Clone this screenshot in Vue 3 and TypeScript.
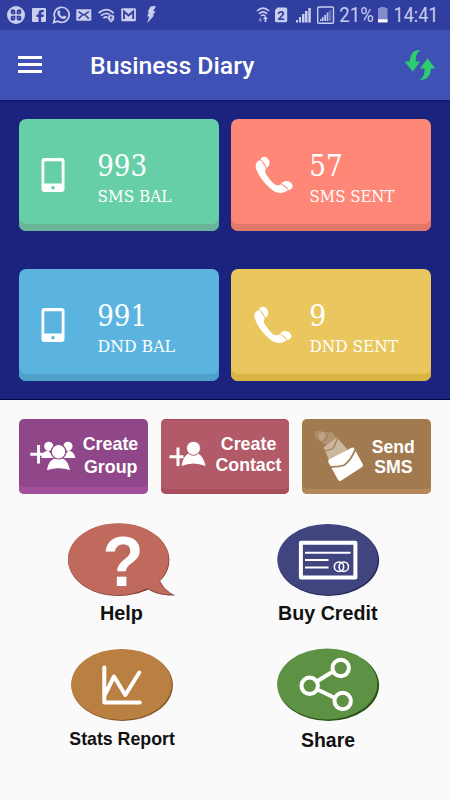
<script setup lang="ts">
interface Stat {
  value: string
  label: string
  tone: string
  icon: 'phone' | 'call'
  valueWidth: number
  labelWidth: number
  shift: number
}

const stats: Stat[] = [
  { value: '993', label: 'SMS BAL', tone: 'green', icon: 'phone', valueWidth: 50, labelWidth: 74, shift: 0 },
  { value: '57', label: 'SMS SENT', tone: 'coral', icon: 'call', valueWidth: 33.5, labelWidth: 85, shift: 0 },
  { value: '991', label: 'DND BAL', tone: 'blue', icon: 'phone', valueWidth: 50, labelWidth: 77.5, shift: 0 },
  { value: '9', label: 'DND SENT', tone: 'gold', icon: 'call', valueWidth: 17, labelWidth: 88.5, shift: -1.3 },
]
</script>

<template>
  <main class="screen">
    <header class="status">
      <svg class="status-art" viewBox="0 0 450 30" width="450" height="30">
        <g fill="#c9cdee">
          <circle cx="16" cy="15" r="9" />
          <g fill="#303f9f">
            <path d="M11 9.5h2.5q1.8 0 1.8 1.8v2.9h-2.8q-1.8 0-1.8-1.8zM21 9.500h-2.500q-1.800 0-1.800 1.800v2.900h2.800q1.800 0 1.800-1.800zM11 20.500h2.500q1.800 0 1.800-1.800v-2.900h-2.800q-1.800 0-1.800 1.800zM21 20.500h-2.500q-1.800 0-1.800-1.800v-2.900h2.800q1.800 0 1.800 1.800z" />
            <g fill="#9299cd"><circle cx="13.200" cy="12.200" r=".7" /><circle cx="18.800" cy="12.200" r=".7" /><circle cx="13.200" cy="17.800" r=".7" /><circle cx="18.800" cy="17.800" r=".7" /></g>
          </g>
          <rect x="32" y="8" width="14" height="14" rx="1" />
          <path d="M38.500 22v-5h-2v-2.400h2v-1.500q0-3.200 3-3.200h2.300v2.400h-1.600q-1.100 0-1.100 1.200v1.100h2.700l-.4 2.400h-2.300v5z" fill="#303f9f" />
          <path d="M53.600 22.700l1.300-4.700a7.500 7.500 0 1 1 2.900 3.200z" fill="none" stroke="#c9cdee" stroke-width="1.700" />
          <path d="M58 10.700q.7-.8 1.500-.4l1 2.300-.9 1.300q1.200 2.200 3.300 2.900l1.100-1.300 2.300 1.100q.2 2.300-2.500 2.500-3.400-.3-6-4.200-1.300-2.400.2-4.200z" />
          <rect x="76.300" y="9.300" width="15" height="11.500" rx=".8" />
          <path d="M78.500 11.700l5.200 3.500 5.200-3.500M78.500 18.600l3.600-3.300M88.900 18.600l-3.600-3.300" fill="none" stroke="#303f9f" stroke-width="1.500" />
          <g fill="none" stroke="#c9cdee" stroke-width="1.700">
            <path d="M98.700 13q8-7 15 .2M101 15.700q5.800-4.700 10.300 0M103.400 18.200q2.800-2.400 5 0" />
          </g>
          <path d="M107.700 15.500l3.400-1 3.400 1v3.200q-.8 2.600-3.400 4-2.700-1.400-3.400-4z" stroke="#303f9f" stroke-width=".6" />
          <path d="M111 16v4.500M109.500 17.500h3" stroke="#303f9f" stroke-width=".8" />
          <path d="M121.300 9.500q0-1.300 1.300-1.300h12q1.300 0 1.300 1.300v10.500q0 1.200-1.300 1.200h-12q-1.300 0-1.300-1.200z" />
          <path d="M124 19V11.500l4.600 4 4.600-4V19" fill="none" stroke="#303f9f" stroke-width="1.800" />
          <path d="M150.500 6.500l5.500-.5-2.800 5.200h2.500l-3 4h1.600l-7.300 8 2.400-6.700h-2.500l2.200-4.200h-1.500z" />
          <g fill="none" stroke="#c9cdee" stroke-width="1.500">
            <path d="M257 11q6-5.800 12.200 0M259 13.700q4-3.700 8.200 0M261 16q2-1.900 4.300 0" />
          </g>
          <path d="M264.600 22v-3h-1.700l2.500-3 2.500 3h-1.600v3z" />
          <path d="M259.500 17.500h1.500v2h1.500l-2.200 2.500-2.300-2.500h1.500z" opacity=".55" />
          <path d="M277.500 7.500h8q1.700 0 1.700 1.500v11.700q0 1.500-1.700 1.500h-9q-1.500 0-1.500-1.500V10z" />
          <g><rect x="296" y="20" width="2" height="2.500" /><rect x="299" y="17" width="2" height="5.500" /><rect x="302" y="14" width="2.500" height="8.500" /><rect x="305" y="11" width="2.500" height="11.500" /><rect x="308.300" y="8" width="2.500" height="14.500" /></g>
          <rect x="317.700" y="7" width="15.800" height="16.300" rx="1" fill="none" stroke="#c9cdee" stroke-width="1.400" />
          <rect x="320" y="19" width="1.500" height="2" /><rect x="322" y="17" width="1.600" height="4" /><rect x="324.300" y="15" width="1.700" height="6" /><rect x="326.600" y="12.500" width="1.700" height="8.500" opacity=".9" />
          <path d="M328.500 11.500l3-2v11.500h-3z" opacity=".35" />
          <path d="M378 8h2V7h5v1h2.500v14.500H378z" opacity=".55" />
          <rect x="378" y="19.300" width="9.500" height="3" fill="#fff" />
        </g>
        <g class="status-text">
          <text x="277.300" y="19.500" class="sim">2</text>
          <text x="339.300" y="22.300" textLength="34.500" lengthAdjust="spacingAndGlyphs">21%</text>
          <text x="393.500" y="22.300" textLength="45" lengthAdjust="spacingAndGlyphs">14:41</text>
        </g>
      </svg>
    </header>

    <nav class="bar">
      <span class="burger"><i></i><i></i><i></i></span>
      <h1>Business Diary</h1>
      <svg class="sync" viewBox="404 49 32 32" width="32" height="32" fill="#2ecc71">
        <path d="M420.700 50q-10.300-.8-11 11.500h-5l8 10.300 7.500-10.300h-4.400q-.6-8 4.900-11.500z" />
        <path d="M419.700 80q10.700 0 11.300-11.500h4.200l-7.600-10.300-7.700 10.300h4.700q.5 8-4.900 11.500z" />
      </svg>
    </nav>

    <section class="stats">
      <article v-for="s in stats" :key="s.label" class="stat" :class="s.tone">
        <svg class="stat-icon" viewBox="0 0 79 112" width="79" height="112">
          <g v-if="s.icon === 'phone'">
            <path fill-rule="evenodd" d="M25.500 39h17q3 0 3 3v28q0 3-3 3h-17q-3 0-3-3V42q0-3 3-3zM25.300 42.200v22.300h17.400V42.200z" fill="#fff" />
            <circle class="dot" cx="34" cy="68.800" r="1.700" />
          </g>
          <g v-else :transform="`translate(${s.shift} 0)`" fill="#fff">
            <path d="M28.200 41.200c-3.700 2.300-4.300 5.800-2.400 10.300C29.500 60 36.700 68 43.500 72.600c4.300 2.100 9.300 2 13-1l.2-1.300-6.700-5c-2.200 1.200-4.500 1.300-6.500-.1-3.800-3-6.300-6.500-8.600-10.400-1.100-2.300-.8-3.800.2-5.600l-4.600-7.300z" />
            <path d="M29.400 40.200c1.800-3.200 5.200-3.200 7.400-.7 2.300 2.700 2.400 5.300.2 8.400l-1.500.5c-1.300-3.500-3.300-6-6.100-8.200zM50.800 64.300c2.200-3.200 6.700-2.900 9.300-.4 2.400 2.400 2.200 4.600-.6 6.600l-2 .5c-1.300-3-3.700-5-6.900-5.900z" />
          </g>
        </svg>
        <svg class="stat-text" viewBox="0 0 115 112" width="115" height="112">
          <text x="-.8" y="57" class="value" :textLength="s.valueWidth" lengthAdjust="spacingAndGlyphs">{{ s.value }}</text>
          <text x="-.5" y="82.700" class="label" :textLength="s.labelWidth" lengthAdjust="spacingAndGlyphs">{{ s.label }}</text>
        </svg>
      </article>
    </section>

    <section class="actions">
      <svg class="action purple" viewBox="19 419 128 74.500">
        <path d="M30 454.300h14M38.300 445v18.500" class="plus" />
        <g class="glyph">
          <circle cx="48.500" cy="446.300" r="4.600" /><circle cx="67.700" cy="446.300" r="4.600" />
          <path d="M41 458q.8-6.700 7-7.500l6 7.500zM75.200 458q-1.500-6.700-7-7.500l-6 7.500z" />
          <g class="outlined"><path d="M46 471q1.200-10.600 8-13h9q5.500 2.400 7.500 13-12-4.500-24.500 0z" /><circle cx="58.300" cy="451.700" r="7.300" /></g>
        </g>
        <text x="82.500" y="450.300" textLength="55.500" lengthAdjust="spacingAndGlyphs">Create</text>
        <text x="83.700" y="473" textLength="53.500" lengthAdjust="spacingAndGlyphs">Group</text>
      </svg>
      <svg class="action rose" viewBox="160.500 419 128.500 74.500">
        <path d="M169 456.700h14M177.500 447.500v18.500" class="plus" />
        <g class="glyph">
          <path d="M181 466q1.500-10 7.200-12.500h9.500q5.300 3 7.300 12.500-12-5-24 0z" />
          <circle cx="193" cy="448.300" r="7" stroke="#b35a68" stroke-width="1" />
        </g>
        <text x="220.300" y="450" textLength="55.500" lengthAdjust="spacingAndGlyphs">Create</text>
        <text x="215" y="471" textLength="66" lengthAdjust="spacingAndGlyphs">Contact</text>
      </svg>
      <svg class="action brown" viewBox="303 419 128.500 74.500">
        <path d="M316 431h7l3.500 4-3.500 6-7-3z" fill="#fff" opacity=".15" />
        <path d="M319.500 434.500l4-2.500 10 .5 4 6-9.500 7-7.500-4.500z" fill="#fff" opacity=".2" />
        <path d="M324.500 447.500l13.500-10 10.500 12-18.500 10.500z" fill="#fff" opacity=".45" />
        <path d="M325.500 450.500q7 0 9.500-3.500l3.500-8.500" fill="none" stroke="#a17a4f" stroke-width="1.200" />
        <path d="M321 442.500l6-2.500 1.500-6" fill="none" stroke="#a17a4f" />
        <path d="M329.300 462q-.8-1.800 1-2.800l22.200-11.500q1.800-.8 2.800 1l8.500 15.500q.8 1.800-1 3l-21 13.500q-1.800 1-2.800-1z" fill="#fff" />
        <path d="M328.500 466.700q10 .6 16.500-1.400 6.500-4.300 11.300-15.600" fill="none" stroke="#a17a4f" stroke-width="1.700" />
        <text x="372.700" y="452.700" textLength="43" lengthAdjust="spacingAndGlyphs">Send</text>
        <text x="375.200" y="473" textLength="38.500" lengthAdjust="spacingAndGlyphs">SMS</text>
      </svg>
    </section>

    <section class="tiles">
      <svg class="tile" viewBox="0 520 225 125">
        <path d="M118.700 523.700c28 0 50.700 16 50.700 36 0 8.500-3.400 15.500-9.400 21.200 3.500 6.500 8.500 11.500 15.500 14.600-11 .5-19.500-1.300-27-5.900-8.500 3.700-18.500 6.400-29.800 6.400-28 0-50.700-16.300-50.700-36.300s22.700-36 50.700-36z" fill="#803c37" />
        <path d="M118.400 523.300c28 0 50.300 16 50.300 36 0 8.500-3.400 15.500-9.400 21.600 3.500 6.500 7.500 10.500 14.200 13.600-10 .5-18.500-1.600-26-6.200-8.500 3.700-17.800 7-29.100 7-28 0-50.400-16-50.400-36s22.400-36 50.400-36z" fill="#c0695d" />
        <text class="question" x="102.500" y="586" textLength="41" lengthAdjust="spacingAndGlyphs">?</text>
        <text class="caption" x="100" y="619.600" textLength="43" lengthAdjust="spacingAndGlyphs">Help</text>
      </svg>
      <svg class="tile" viewBox="225 520 225 125">
        <ellipse cx="328.400" cy="560.200" rx="50.700" ry="35.800" fill="#222451" />
        <ellipse cx="327.700" cy="559.400" rx="50.300" ry="35.500" fill="#404580" />
        <g fill="none" stroke="#fff">
          <rect x="300.900" y="542.700" width="54.500" height="34.700" stroke-width="4" stroke-linejoin="round" />
          <path d="M305 552.700h45.500M305 560h23.500M305 567.500h23.500" stroke-width="2" />
          <circle cx="339" cy="566.700" r="4.700" stroke-width="1.600" /><circle cx="343.800" cy="566.700" r="4.700" stroke-width="1.600" />
        </g>
        <text class="caption" x="278" y="620" textLength="99.500" lengthAdjust="spacingAndGlyphs">Buy Credit</text>
      </svg>
      <svg class="tile" viewBox="0 645 225 125">
        <ellipse cx="122.200" cy="685.200" rx="50.700" ry="35.800" fill="#805421" />
        <ellipse cx="121.500" cy="684.400" rx="50.300" ry="35.500" fill="#b98041" />
        <path d="M104.300 667.500v35h35.500M105.500 693.500l8.500-17 11.300 18.500 14-22.500" class="chart" />
        <text class="caption small" x="69.300" y="744.500" textLength="105.500" lengthAdjust="spacingAndGlyphs">Stats Report</text>
      </svg>
      <svg class="tile" viewBox="225 645 225 125">
        <ellipse cx="328.400" cy="685.200" rx="50.700" ry="35.900" fill="#285218" />
        <ellipse cx="327.300" cy="684" rx="50.100" ry="35.500" fill="#5d9244" />
        <g fill="none" stroke="#fff" stroke-width="4">
          <path d="M317.500 681l15.500-9.500M318.500 690l15.500 7.500" />
          <circle cx="309.700" cy="685.800" r="8.200" /><circle cx="340.700" cy="668" r="8.200" /><circle cx="342.700" cy="701" r="8.200" />
        </g>
        <text class="caption" x="301" y="746.500" textLength="54" lengthAdjust="spacingAndGlyphs">Share</text>
      </svg>
    </section>
  </main>
</template>

<style>
body { margin: 0; }
</style>

<style scoped>
.screen { width: 450px; height: 800px; overflow: hidden; background: #fafafa; }
svg { display: block; flex: none; }
.status { height: 30px; background: #303f9f; }
.status-text { font: 20px Roboto, sans-serif; fill: #c9cdee; }
.sim { font-size: 13px; font-weight: 700; fill: #303f9f; }
.bar { display: flex; align-items: center; height: 70px; box-sizing: border-box; padding: 0 14px 0 18px; background: #3f51b5; }
.burger { display: flex; flex-direction: column; gap: 4.500px; width: 24px; margin-top: -1px; }
.burger i { height: 2.500px; background: #fff; }
.bar h1 { flex: 1; margin: 2px 0 0 48px; font: 500 24.800px/30px Roboto, sans-serif; color: #fff; white-space: nowrap; }
.stats { display: grid; grid-template-columns: 200px 200px; grid-template-rows: 112px 112px; column-gap: 12px; row-gap: 38px; height: 300px; box-sizing: border-box; padding: 19px 0 0 19px; background: #1a237e; border-bottom: 1px solid #05064f; box-shadow: inset 0 2px 2px -1px #10165f; }
.stat { display: flex; border-radius: 7px; overflow: hidden; }
.green { background: #67cfa8; box-shadow: inset 0 -7px #6bb398; }
.coral { background: #ff8777; box-shadow: inset 0 -7px #e27869; }
.blue { background: #5ab4df; box-shadow: inset 0 -7px #50a1ca; }
.gold { background: #eac75e; box-shadow: inset 0 -7px #d9b442; }
.green .dot { fill: #67cfa8; }
.blue .dot { fill: #5ab4df; }
.stat-text { overflow: visible; fill: #fff; font-family: "DejaVu Serif Condensed", "DejaVu Serif", serif; }
.value { font-size: 30px; }
.label { font-size: 17.500px; }
.actions { display: flex; gap: 13px; height: 120px; box-sizing: border-box; padding: 19px 0 0 19px; }
.action { width: 128.500px; height: 74.500px; border-radius: 5px; font: 700 18.500px "Liberation Sans", sans-serif; fill: #fff; }
.purple { background: #904789; box-shadow: inset 0 -7px #a14f9b; }
.rose { background: #b35a68; box-shadow: inset 0 -5px #a84e5d, inset 0 1px #a94759; }
.brown { background: #a17a4f; box-shadow: inset 0 -5px #b4885a; }
.plus { fill: none; stroke: #fff; stroke-width: 3; }
.glyph { fill: #fff; }
.outlined { stroke: #904789; stroke-width: 1.200px; }
.tiles { display: grid; grid-template-columns: 225px 225px; grid-template-rows: 125px 125px; }
.tile { width: 225px; height: 125px; font-family: "Liberation Sans", sans-serif; font-weight: 700; }
.caption { font-size: 19.500px; fill: #111; }
.small { font-size: 18.500px; }
.question { font-size: 71px; fill: #fff; }
.chart { fill: none; stroke: #fff; stroke-width: 4; stroke-linecap: round; stroke-linejoin: round; }
</style>
